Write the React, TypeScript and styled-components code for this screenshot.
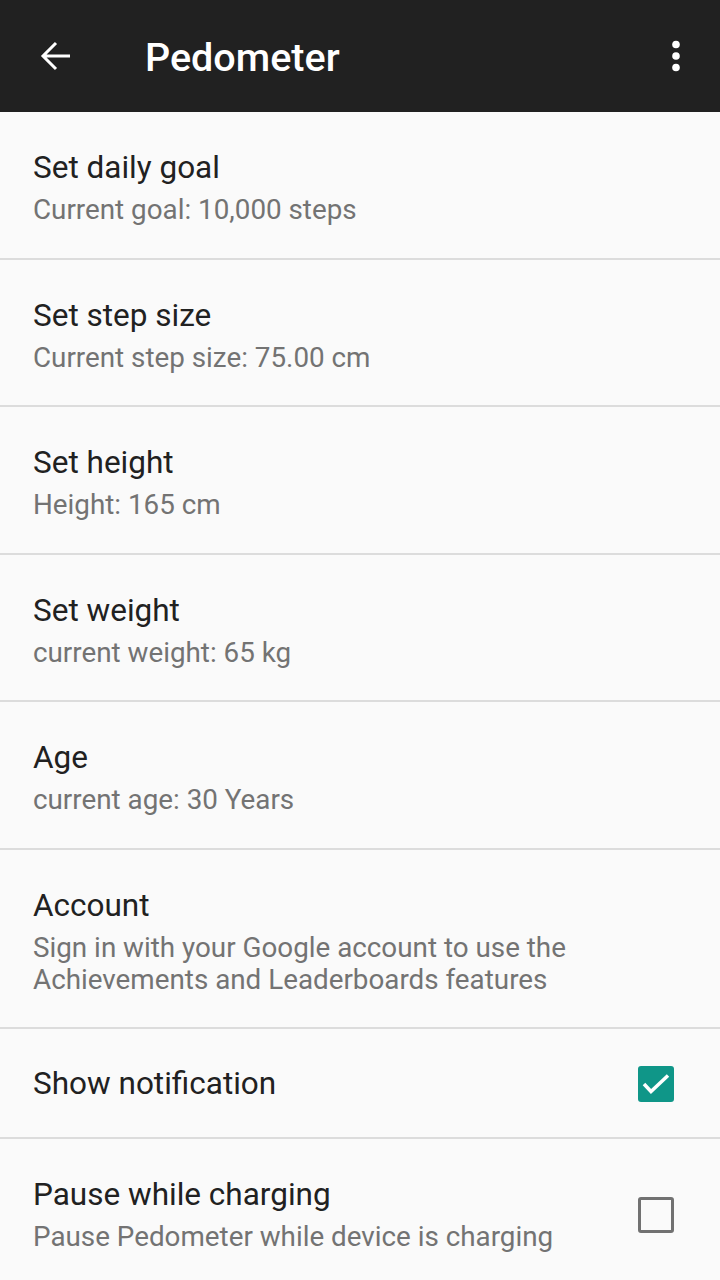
import React from 'react';
import styled, { createGlobalStyle } from 'styled-components';

const GlobalStyle = createGlobalStyle`
	html, body {
		margin: 0;
		padding: 0;
		background: #fafafa;
		font-family: Roboto, "Noto Sans", sans-serif;
	}
`;

const Screen = styled.div`
	width: 720px;
	height: 1280px;
	overflow: hidden;
	background: #fafafa;
	display: flex;
	flex-direction: column;
`;

const AppBar = styled.header`
	height: 112px;
	flex-shrink: 0;
	box-sizing: border-box;
	background: #212121;
	display: flex;
	align-items: center;
	padding: 0 28px 0 40px;
	color: #ffffff;
`;

const IconButton = styled.div`
	width: 32px;
	height: 32px;
	display: flex;
	align-items: center;
	justify-content: center;
`;

const Title = styled.h1`
	margin: 2px 0 0 73px;
	flex: 1;
	font-size: 39.5px;
	font-weight: 500;
	letter-spacing: 0;
`;

const List = styled.div`
	display: flex;
	flex-direction: column;
`;

const Row = styled.div<{ $last?: boolean; $single?: boolean }>`
	display: flex;
	align-items: center;
	padding: ${(p) => (p.$single ? '37px 46px 35px 33px' : '38px 46px 31.5px 33px')};
	border-bottom: ${(p) => (p.$last ? 'none' : '2px solid #dcdcdc')};
`;

const Texts = styled.div`
	flex: 1;
	display: flex;
	flex-direction: column;
	gap: 8px;
`;

const RowTitle = styled.div`
	font-size: 31.5px;
	line-height: 36px;
	color: #212121;
`;

const Summary = styled.div`
	font-size: 27.8px;
	line-height: 32px;
	color: #737373;
`;

const Box = styled.div<{ $checked?: boolean }>`
	width: 36px;
	height: 36px;
	box-sizing: border-box;
	border-radius: 3px;
	background: ${(p) => (p.$checked ? '#0f9688' : 'transparent')};
	border: ${(p) => (p.$checked ? 'none' : '3.5px solid #717171')};
	display: flex;
	align-items: center;
	justify-content: center;
	flex-shrink: 0;
`;

const Back = () => (
	<svg width="32" height="32" viewBox="0 0 32 32">
		<path d="M30 16H4M16 3L3 16l13 13" fill="none" stroke="#fff" strokeWidth="3" />
	</svg>
);

const More = () => (
	<svg width="8" height="32" viewBox="0 0 8 32">
		<circle cx="4" cy="4.5" r="3.8" fill="#fff" />
		<circle cx="4" cy="16" r="3.8" fill="#fff" />
		<circle cx="4" cy="27.5" r="3.8" fill="#fff" />
	</svg>
);

const Check = () => (
	<svg width="36" height="36" viewBox="0 0 36 36">
		<path d="M6 18l7 7.5L30 9.5" fill="none" stroke="#fff" strokeWidth="3.5" />
	</svg>
);

const items = [
	{ title: 'Set daily goal', summary: 'Current goal: 10,000 steps' },
	{ title: 'Set step size', summary: 'Current step size: 75.00 cm' },
	{ title: 'Set height', summary: 'Height: 165 cm' },
	{ title: 'Set weight', summary: 'current weight: 65 kg' },
	{ title: 'Age', summary: 'current age: 30 Years' },
	{
		title: 'Account',
		summary: 'Sign in with your Google account to use the Achievements and Leaderboards features',
	},
];

export default function App() {
	return (
		<Screen>
			<GlobalStyle />
			<AppBar>
				<IconButton>
					<Back />
				</IconButton>
				<Title>Pedometer</Title>
				<IconButton>
					<More />
				</IconButton>
			</AppBar>
			<List>
				{items.map((item) => (
					<Row key={item.title}>
						<Texts>
							<RowTitle>{item.title}</RowTitle>
							<Summary>{item.summary}</Summary>
						</Texts>
					</Row>
				))}
				<Row $single>
					<Texts>
						<RowTitle>Show notification</RowTitle>
					</Texts>
					<Box $checked>
						<Check />
					</Box>
				</Row>
				<Row $last>
					<Texts>
						<RowTitle>Pause while charging</RowTitle>
						<Summary>Pause Pedometer while device is charging</Summary>
					</Texts>
					<Box />
				</Row>
			</List>
		</Screen>
	);
}
